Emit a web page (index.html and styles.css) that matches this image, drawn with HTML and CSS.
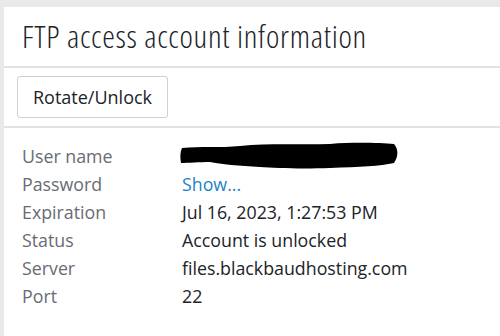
FILE: index.html
```html
<!DOCTYPE html>
<html>
<head>
<meta charset="utf-8">
<link rel="stylesheet" href="styles.css">
</head>
<body>
<div class="page">
  <div class="panel">
    <header class="head"><h1 class="title">FTP access account information</h1></header>
    <div class="toolbar"><button class="btn">Rotate/Unlock</button></div>
    <dl class="info">
      <dt>User name</dt>
      <dd class="redacted"><svg width="220" height="28" viewBox="0 0 220 28"><path d="M2 6 C20 4 40 6 60 4 C90 1 120 3 150 2 C175 0 200 1 214 2 C218 6 219 14 214 21 C200 24 180 25 150 26 C120 27 95 26 80 25 C60 24 40 22 30 20 C20 20 8 21 1 21 C0 16 0 10 2 6 Z" fill="#000"/></svg></dd>
      <dt>Password</dt>
      <dd><a class="link" href="#">Show...</a></dd>
      <dt>Expiration</dt>
      <dd>Jul 16, 2023, 1:27:53 PM</dd>
      <dt>Status</dt>
      <dd>Account is unlocked</dd>
      <dt>Server</dt>
      <dd>files.blackbaudhosting.com</dd>
      <dt>Port</dt>
      <dd>22</dd>
    </dl>
  </div>
</div>
</body>
</html>
```
FILE: styles.css
```css
html, body { margin: 0; padding: 0; }
body { background: #e9e9e9; font-family: "Open Sans", "Liberation Sans", sans-serif; width: 500px; height: 336px; overflow: hidden; }
.page { padding: 7px 0 0 4px; height: 100%; box-sizing: border-box; }
.panel { background: #fff; height: 100%; }
.head { height: 59px; border-bottom: 2px solid #e2e2e2; display: flex; align-items: center; padding-left: 18px; }
.title { margin: 0 0 2px 0; font-weight: 300; font-size: 32px; font-stretch: 75%; letter-spacing: 0.7px; color: #212327; }
.toolbar { height: 58px; border-bottom: 2px solid #e2e2e2; display: flex; align-items: center; padding-left: 13px; }
.btn { font-family: inherit; font-size: 18px; color: #212327; background: #fff; border: 1px solid #cdcfd2; border-radius: 3px; height: 42px; width: 151px; padding: 0; }
.info { margin: 0; padding: 14px 0 0 18px; display: grid; grid-template-columns: 160px auto; grid-auto-rows: 28px; align-items: center; font-size: 17.8px; }
.info dt { color: #686c73; }
.info dd { margin: 0; color: #212327; }
.redacted { display: flex; align-items: center; margin-left: -2px !important; }
.redacted svg { display: block; }
.link { color: #1c84c6; text-decoration: none; }
```
